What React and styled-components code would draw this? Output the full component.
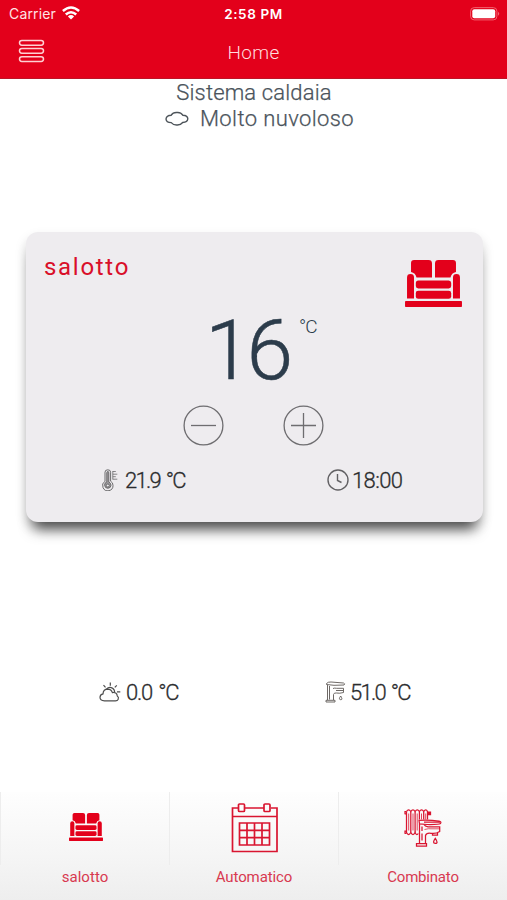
import React from "react";
import styled, { createGlobalStyle } from "styled-components";

const Global = createGlobalStyle`
  *, *::before, *::after { box-sizing: border-box; }
  html, body { margin: 0; background: #fff; }
  body { font-family: Roboto, "Open Sans", sans-serif; overflow: hidden; }
  svg { display: block; flex: none; }
`;

const Page = styled.div`
  display: flex;
  flex-direction: column;
  width: 507px;
  height: 900px;
  background: #fff;
`;

const Header = styled.header`
  flex: none;
  height: 79px;
  background: #e3001b;
  border-bottom: 1px solid #bd1427;
  color: #fff;
`;

const StatusBar = styled.div`
  display: grid;
  grid-template-columns: 1fr auto 1fr;
  align-items: center;
  height: 28px;
  padding: 0 7px 0 9px;
  font: 400 14px/28px Inter, sans-serif;
`;

const Carrier = styled.div`
  display: flex;
  align-items: center;
  gap: 6px;
  color: #ffe3e5;
  letter-spacing: 0.15px;
  svg { margin-top: -3px; }
`;

const Clock = styled.div`
  padding-right: 2px;
  font-weight: 600;
  font-size: 13.5px;
  letter-spacing: 0.6px;
`;

const BatterySlot = styled.div`
  display: flex;
  justify-content: flex-end;
`;

const NavBar = styled.div`
  display: grid;
  grid-template-columns: 60px 1fr 60px;
  height: 50px;
`;

const MenuButton = styled.button`
  display: flex;
  padding: 11px 0 0 18px;
  border: 0;
  background: none;
  color: #ffd0d3;
`;

const Title = styled.h1`
  margin: 0;
  text-align: center;
  font-size: 19px;
  line-height: 50px;
  font-weight: 300;
  letter-spacing: 0.35px;
  color: #ffdcdf;
`;

const Weather = styled.section`
  flex: none;
  display: flex;
  flex-direction: column;
  align-items: center;
  height: 153px;
  padding-top: 1px;
`;

const WeatherLine = styled.div`
  display: flex;
  align-items: center;
  gap: ${(p) => p.$gap || 0}px;
  height: 26px;
  padding-left: ${(p) => p.$shift}px;
  font-size: 22px;
  line-height: 26px;
  font-weight: 300;
  letter-spacing: ${(p) => p.$spacing}px;
  color: #4a535b;
  -webkit-text-stroke: 0.25px;
`;

const Card = styled.section`
  flex: none;
  display: flex;
  flex-direction: column;
  width: 457px;
  height: 290px;
  margin-left: 26px;
  border-radius: 12px;
  background: #eeecef;
  box-shadow: 0 14px 14px -7px rgba(0, 0, 0, 0.68), 0 6px 12px rgba(0, 0, 0, 0.15);
`;

const CardTop = styled.div`
  display: flex;
  justify-content: space-between;
  height: 80px;
  padding: 20px 21px 0 18px;
`;

const Room = styled.h2`
  margin: 0;
  color: #d90f29;
  font-size: 24px;
  line-height: 30px;
  font-weight: 400;
  letter-spacing: 1.7px;
`;

const RoomIcon = styled.div`
  padding-top: 8px;
`;

const Target = styled.div`
  display: flex;
  height: 82px;
  padding-left: 179px;
  color: #2c3c4b;
`;

const TargetValue = styled.div`
  width: 94px;
  font-size: 84px;
  line-height: 77px;
  font-weight: 300;
  letter-spacing: -5px;
  -webkit-text-stroke: 0.5px;
`;

const TargetUnit = styled.div`
  font-size: 19px;
  line-height: 30px;
  font-weight: 300;
  letter-spacing: -1px;
`;

const Controls = styled.div`
  display: flex;
  gap: 59px;
  height: 65px;
  padding: 10px 0 0 157px;
`;

const RoundButton = styled.button`
  display: block;
  height: 42px;
  padding: 0;
  border: 0;
  background: none;
  color: #6e6d70;
`;

const Readings = styled.div`
  display: grid;
  grid-template-columns: ${(p) => p.$first}px auto;
  height: 42px;
  padding-left: ${(p) => p.$inset}px;
`;

const Reading = styled.div`
  display: flex;
  align-items: center;
  gap: ${(p) => p.$gap}px;
  height: 42px;
  font-size: 22px;
  font-weight: 300;
  letter-spacing: ${(p) => p.$spacing}px;
  word-spacing: 2px;
  white-space: nowrap;
  color: #2b2c2e;
  -webkit-text-stroke: 0.3px;
`;

const Outside = styled.section`
  flex: 1;
  padding-top: 149px;
`;

const TabBar = styled.nav`
  flex: none;
  display: grid;
  grid-template-columns: 169px 169px 169px;
  height: 108px;
  background: linear-gradient(#fefefe, #f5f5f5 60%, #eeeeee);
`;

const Tab = styled.button`
  display: flex;
  flex-direction: column;
  align-items: center;
  padding: 0;
  border: 0;
  border-left: 1px solid;
  border-image: linear-gradient(#ededed 67%, transparent 67%) 1;
  background: none;
`;

const TabIcon = styled.div`
  display: grid;
  place-items: center;
  height: 71px;
  padding-left: 1px;
`;

const TabLabel = styled.span`
  font: 400 15px/29px Roboto, sans-serif;
  letter-spacing: ${(p) => p.$spacing}px;
  color: #d83950;
`;

const Sofa = ({ width }) => (
  <svg width={width} height={width * 0.824} viewBox="0 0 57 47" fill="#e3001b">
    <rect y="41" width="57" height="6" rx=".8" />
    <path d="M9 0h14.500q3.500 0 3.500 3.500V17.500H11.500Q10.500 13 6 12V3Q6 0 9 0Z" />
    <path d="M33.500 0H48q3 0 3 3v9q-4.500 1-5.500 5.500H30V3.500Q30 0 33.500 0Z" />
    <path d="M2 38.500V17.500q0-3.500 3.500-3.500t3.500 3.500v21Z" />
    <path d="M48 38.500V17.500q0-3.500 3.500-3.500t3.500 3.500v21Z" />
    <rect x="10.800" y="20.500" width="35.400" height="8" rx="2.500" />
    <rect x="10.800" y="30.700" width="35.400" height="8" rx="2.500" />
  </svg>
);

const Wifi = () => (
  <svg width="18" height="14" viewBox="0 0 18 14" fill="none" stroke="#fff" strokeWidth="2.500">
    <path d="M.9 5Q9-2 17.100 5M3.800 8.500Q9 3.900 14.200 8.500" />
    <path d="M5.900 10.400Q9 7.800 12.100 10.400L9 13.500Z" fill="#fff" stroke="none" />
  </svg>
);

const Battery = () => (
  <svg width="30" height="14" viewBox="0 0 30 14">
    <rect x=".6" y=".6" width="26.300" height="12.300" rx="3.600" fill="none" stroke="#f2606e" />
    <rect x="2.300" y="2.300" width="22.900" height="9" rx="2" fill="#fff" />
    <path d="M28.200 4.800q2 2 0 4Z" fill="#f57b86" />
  </svg>
);

const MenuIcon = () => (
  <svg width="27" height="25" viewBox="0 0 27 25" fill="none" stroke="currentColor" strokeWidth="1.500">
    <rect x="1.500" y="1.500" width="24" height="4.700" rx="2.350" />
    <rect x="1.500" y="9.500" width="24" height="4.700" rx="2.350" />
    <rect x="1.500" y="17.700" width="24" height="4.700" rx="2.350" />
  </svg>
);

const Cloud = () => (
  <svg width="24" height="16" viewBox="0 0 24 16" fill="none" stroke="#4c5359" strokeWidth="1.400">
    <path d="M6.200 4.200Q8 1.200 12 1.500Q15.700 1.100 17.800 4.200Q22.700 4.300 22.800 7.800Q22.500 11.500 17.700 11.500Q15.500 14.200 12 14Q8.500 14.200 6.200 11.600Q1.200 11.500 1 8Q1.500 4.300 6.200 4.200Z" />
  </svg>
);

const CircleSign = ({ plus }) => (
  <svg width="41" height="41" viewBox="0 0 41 41" fill="none" stroke="currentColor" strokeWidth="1.300">
    <circle cx="20.500" cy="20.500" r="19.400" />
    <path d={plus ? "M8 20.500h25M20.500 8v25" : "M8 20.500h25"} />
  </svg>
);

const Thermometer = () => (
  <svg width="16" height="22" viewBox="0 0 16 22" fill="none" stroke="#6b6a6c" strokeWidth="1">
    <path d="M3 12.200V3.200Q3 .8 5.800.8T8.600 3.200v9Q11 13.500 11 16.300A5.200 5.200 0 1 1 3 12.200Z" />
    <path d="M4.800 13V3.800Q4.800 2.500 5.800 2.500T6.800 3.800V13Q9 14 9 16.300A3.200 3.200 0 1 1 4.800 13Z" fill="#9b999c" />
    <circle cx="5.800" cy="16.500" r="1.500" fill="#eeecef" />
    <path d="M10.800 2v8.500M10.800 2.500h3M10.800 5.200h4.500M10.800 7.700h3M10.800 10.200h4.500" strokeWidth=".8" />
  </svg>
);

const ClockIcon = () => (
  <svg width="22" height="22" viewBox="0 0 22 22" fill="none" stroke="#626164" strokeWidth="1.400">
    <circle cx="11" cy="11" r="10" />
    <path d="M10.500 5v6.500l4 2" />
  </svg>
);

const CloudSun = () => (
  <svg width="22" height="21" viewBox="0 0 22 21" fill="none" stroke="#4d4d4d" strokeWidth="1.200">
    <path d="M5.500 18.800Q1 18.600 1 15.200Q1.100 12.500 4 11.900Q4.300 7.300 8.700 7.200Q12.300 7.200 13.400 10.600Q17.700 9.900 18.300 13.900Q20 15 19.200 17.200Q18.500 18.800 16.500 18.800Z" />
    <path d="M7.200 7.400Q10 4.400 13.300 6.100Q16 7.800 15.500 10.700M11.300.5v3.200M4.500 3.200l2 2.200M17.800 3.300l-2 2M18 9.800h3.300" />
  </svg>
);

const Faucet = () => (
  <svg width="22" height="22" viewBox="0 0 22 22" fill="none" stroke="#66615e" strokeWidth=".95">
    <path d="M1.500 2.500Q3 .8 6 1L18.500 2Q20.500 2.700 19 4L9 4.300L1.500 3.500Z" />
    <path d="M2.500 4v15M8.500 19v-5.500Q9 11.500 11.500 12Q14.500 12.700 18.500 11.500V7.300H11.500Q9.500 6.800 8 7.500M1 19.300h9v1.700h-9ZM4.500 5v13.500M11 9.500h7" />
    <path d="M15.700 15q-2.500 3.500 0 3.700t0-3.700Z" />
  </svg>
);

const Calendar = () => (
  <svg width="48" height="50" viewBox="0 0 48 50" fill="none" stroke="#d91530" strokeWidth="1.700">
    <path d="M7 5H1.500v43.500h44.500V5H40M14 5h19M1.500 13.500h44.500" />
    <rect x="7.500" y="1" width="6" height="7.500" rx="1" />
    <rect x="33" y="1" width="6" height="7.500" rx="1" />
    <path d="M8.500 20h30v22h-30ZM16 20v22M23.500 20v22M31 20v22M8.500 27.300h30M8.500 34.600h30" />
  </svg>
);

const RadiatorFaucet = () => (
  <svg width="39" height="38" viewBox="0 0 39 38" fill="none" stroke="#d91530" strokeWidth="1.250">
    <path d="M.8 2.500h1.700M.8 4.800h1.700M.8 22h1.700M.8 24.300h1.700M1 2v3.300M1 21.500v3.300" />
    <path d="M23.500 3h3v2.500h-3" fill="#d91530" />
    <path d="M2.500 2.500Q4.600-1 6.800 2.500Q9-1 11.100 2.500Q13.300-1 15.400 2.500Q17.600-1 19.700 2.500Q21.900-1 23.500 2.500V10.500" />
    <path d="M2.500 2.500V23.500Q4.600 27.500 6.800 23.500Q9 27.500 11.100 23.500Q12.500 27 14.300 24.500" />
    <path d="M6.800 2.500v21M11.100 2.500v21M15.400 2.500v8M19.700 2.500v8" />
    <path d="M4.700 4.500v17M9 4.500v17M13.200 4.500v17M17.500 4.500v6M21.700 4.500v6" strokeWidth=".8" />
    <path d="M15 11.300Q25 10.700 35 12Q37.800 12.700 36.500 14.500Q35 15.700 23 15.500L15.500 14.800ZM20 13.200H36" />
    <path d="M15.500 15V34.500M21.500 34.500V26.500Q22.500 23.500 27 24.300Q32 25 35.700 22.500V17.800Q30 18 24 17.800Q21 17.500 20 15.500M18 17.500v4.500M18 24.500v7M28.500 24.500v1.500h5V23.500M12.500 34.700h10v2.300h-10Z" />
    <path d="M20.500 20.500Q25 19.300 27 19.800H35.500" strokeWidth=".7" />
    <path d="M31.300 29.300q-3.500 4.700 0 5t0-5Z" />
  </svg>
);

const tabs = [
  { label: "salotto", icon: <Sofa width={34} />, spacing: 0.05 },
  { label: "Automatico", icon: <Calendar />, spacing: -0.1 },
  { label: "Combinato", icon: <RadiatorFaucet />, spacing: -0.2 },
];

export default function App() {
  return (
    <Page>
      <Global />
      <Header>
        <StatusBar>
          <Carrier>Carrier <Wifi /></Carrier>
          <Clock>2:58 PM</Clock>
          <BatterySlot><Battery /></BatterySlot>
        </StatusBar>
        <NavBar>
          <MenuButton aria-label="Menu"><MenuIcon /></MenuButton>
          <Title>Home</Title>
        </NavBar>
      </Header>
      <Weather>
        <WeatherLine $spacing={0.15} $shift={1}>Sistema caldaia</WeatherLine>
        <WeatherLine $spacing={0.4} $gap={11} $shift={12}><Cloud />Molto nuvoloso</WeatherLine>
      </Weather>
      <Card>
        <CardTop>
          <Room>salotto</Room>
          <RoomIcon><Sofa width={57} /></RoomIcon>
        </CardTop>
        <Target>
          <TargetValue>16</TargetValue>
          <TargetUnit>°C</TargetUnit>
        </Target>
        <Controls>
          <RoundButton aria-label="Meno"><CircleSign /></RoundButton>
          <RoundButton aria-label="Più"><CircleSign plus /></RoundButton>
        </Controls>
        <Readings $inset={76} $first={225}>
          <Reading $gap={7} $spacing={-1.7}><Thermometer />21.9 °C</Reading>
          <Reading $gap={3} $spacing={-0.6}><ClockIcon />18:00</Reading>
        </Readings>
      </Card>
      <Outside>
        <Readings $inset={99} $first={226}>
          <Reading $gap={5} $spacing={-1.2}><CloudSun />0.0 °C</Reading>
          <Reading $gap={3} $spacing={-1.7}><Faucet />51.0 °C</Reading>
        </Readings>
      </Outside>
      <TabBar>
        {tabs.map((t) => (
          <Tab key={t.label}>
            <TabIcon>{t.icon}</TabIcon>
            <TabLabel $spacing={t.spacing}>{t.label}</TabLabel>
          </Tab>
        ))}
      </TabBar>
    </Page>
  );
}
